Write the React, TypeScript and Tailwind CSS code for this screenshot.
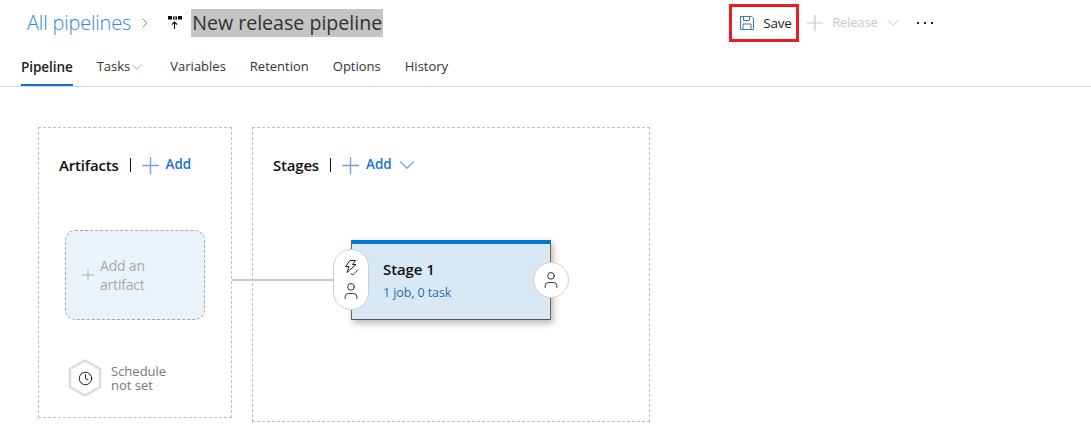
import { ChevronDown, ChevronRight, Clock, Plus, User } from "lucide-react";

const font = "font-['Open_Sans','Noto_Sans',sans-serif]";

function Tab({ label, active, chevron }: { label: string; active?: boolean; chevron?: boolean }) {
  return (
    <div
      className={`flex h-[40px] items-center border-b-2 pt-[4px] ${
        active ? "border-[#0078d4] text-[13.600px] font-semibold tracking-[-0.1px] text-[#222]" : "border-transparent text-[13px] text-[#333]"
      }`}
    >
      {label}
      {chevron && <ChevronDown className="ml-[-2px] h-[18px] w-[18px] text-[#999]" strokeWidth={1.1} />}
    </div>
  );
}

function PipelineIcon() {
  return (
    <svg width="16" height="16" viewBox="0 0 16 16" className="mr-[8px]">
      <rect x="1" y="1" width="4" height="3.500" fill="#111" />
      <rect x="6.500" y="2" width="3" height="2" fill="none" stroke="#111" strokeWidth="1" />
      <rect x="11" y="1" width="4" height="3.500" fill="#111" />
      <path d="M7.500 14V7M5 9.500l2.500-2.500L10 9.500" fill="none" stroke="#111" strokeWidth="1.100" />
    </svg>
  );
}

function SaveIcon() {
  return (
    <svg width="16" height="16" viewBox="0 0 16 16" fill="none">
      <path d="M1.500 1.500h11l2 2v11h-13z" stroke="#2a7fd0" strokeWidth="1" />
      <path d="M4.500 1.500v4h6v-4" stroke="#5a6f86" strokeWidth="1" />
      <path d="M4 14.500v-5.500h8v5.500" stroke="#5a6f86" strokeWidth="1" />
    </svg>
  );
}

function TriggerIcon() {
  return (
    <svg width="18" height="18" viewBox="0 0 18 18" fill="none" stroke="#222" strokeWidth="1">
      <path d="M8 1.500h5.500l-3 4h3.500L5 13.500l2-6H3.500z" />
      <path d="M8.500 14.500l2.500 1.500 5-5.500" stroke="#444" />
    </svg>
  );
}

function SectionTitle({ title, chevron }: { title: string; chevron?: boolean }) {
  return (
    <div className="flex h-[18px] items-center">
      <span className="text-[15px] font-semibold leading-none tracking-[-0.2px] text-[#111]">{title}</span>
      <span className="ml-[11px] h-[14px] w-[1px] bg-[#111]" />
      <Plus className="ml-[6px] h-[27px] w-[27px] text-[#6f9fdc]" strokeWidth={1.2} />
      <span className="ml-[2px] text-[13.500px] font-semibold leading-none text-[#1b74cc]">Add</span>
      {chevron && <ChevronDown className="ml-[2px] h-[26px] w-[26px] text-[#7aa6da]" strokeWidth={1.1} />}
    </div>
  );
}

export default function App() {
  return (
    <div className={`h-[441px] w-[1091px] overflow-hidden bg-white ${font}`}>
      <div className="flex h-[46px] items-center pl-[27px]">
        <span className="text-[20px] font-light tracking-[-0.2px] text-[#2f8ad8]">All pipelines</span>
        <ChevronRight className="ml-[6px] mr-[14px] h-[16px] w-[16px] text-[#777]" strokeWidth={1.2} />
        <PipelineIcon />
        <span className="bg-[#c4c4c4] px-[1px] text-[19.600px] leading-[28px] text-[#333]">New release pipeline</span>
        <div className="ml-[346px] flex h-[38px] w-[70px] items-center gap-[8px] border-[3px] border-[#ec1c24] pl-[7px] text-[13.500px] tracking-[-0.2px] text-[#222]">
          <SaveIcon />
          Save
        </div>
        <div className="ml-[3px] flex items-center text-[#c8c8c8]">
          <Plus className="h-[26px] w-[26px]" strokeWidth={1.1} />
          <span className="ml-[4px] text-[13px] tracking-[-0.2px]">Release</span>
          <ChevronDown className="ml-[5px] h-[20px] w-[20px]" strokeWidth={1.2} />
        </div>
        <div className="ml-[14px] flex gap-[5px]">
          <span className="h-[2px] w-[2px] bg-[#222]" />
          <span className="h-[2px] w-[2px] bg-[#222]" />
          <span className="h-[2px] w-[2px] bg-[#222]" />
        </div>
      </div>

      <div className="flex h-[41px] items-end gap-[24px] border-b border-[#d8d8d8] pl-[21px]">
        <Tab label="Pipeline" active />
        <Tab label="Tasks" chevron />
        <Tab label="Variables" />
        <Tab label="Retention" />
        <Tab label="Options" />
        <Tab label="History" />
      </div>

      <div className="relative flex items-start gap-[20px] pl-[38px] pt-[40px]">
        {/* connector between the artifact box and the stage card */}
        <div className="absolute left-[232px] top-[192px] h-[2px] w-[104px] bg-[#c8c8c8]" />

        <div className="flex h-[291px] w-[194px] flex-col border border-dashed border-[#bdbdbd] pl-[20px] pt-[28px]">
          <SectionTitle title="Artifacts" />
          <div className="ml-[6px] mt-[56px] flex h-[90px] w-[140px] items-center rounded-[10px] border border-dashed border-[#a8a8a8] bg-[#ebf3fa] pl-[13px]">
            <Plus className="h-[18px] w-[18px] text-[#a9a9a9]" strokeWidth={1.2} />
            <span className="ml-[3px] text-[14px] leading-[19px] tracking-[-0.2px] text-[#a9a9a9]">
              Add an
              <br />
              artifact
            </span>
          </div>
          <div className="ml-[9px] mt-[39px] flex items-center">
            <div className="relative flex h-[38px] w-[34px] items-center justify-center">
              <svg width="34" height="38" viewBox="0 0 34 38" className="absolute inset-0">
                <path d="M17 1.500L32 10v18L17 36.500 2 28V10z" fill="#fff" stroke="#dcdcdc" strokeWidth="2.500" />
              </svg>
              <Clock className="relative h-[15px] w-[15px] text-[#111]" strokeWidth={1.5} />
            </div>
            <span className="ml-[9px] text-[13px] leading-[14px] text-[#777]">
              Schedule
              <br />
              not set
            </span>
          </div>
        </div>

        <div className="h-[295px] w-[398px] border border-dashed border-[#bdbdbd] pl-[20px] pt-[28px]">
          <SectionTitle title="Stages" chevron />
          <div className="relative ml-[78px] mt-[66px] h-[80px] w-[200px] border-x border-b border-x-[#666] border-b-[#555] border-t-[4px] border-t-[#0078d4] bg-[#d8e8f5] pl-[31px] pt-[15px] shadow-[2px_3px_7px_rgba(0,0,0,0.3)]">
            <div className="text-[15px] font-semibold leading-[20px] tracking-[-0.1px] text-[#111]">Stage 1</div>
            <div className="mt-[6px] text-[12.500px] leading-[16px] tracking-[-0.1px] text-[#2b6ea8]">1 job, 0 task</div>
            <div className="absolute left-[-19px] top-[5px] flex h-[61px] w-[36px] flex-col items-center justify-center gap-[4px] rounded-[18px] border border-[#d0d0d0] bg-white">
              <TriggerIcon />
              <User className="h-[20px] w-[20px] text-[#222]" strokeWidth={1.1} />
            </div>
            <div className="absolute right-[-19px] top-[18px] flex h-[36px] w-[36px] items-center justify-center rounded-full border border-[#d0d0d0] bg-white">
              <User className="h-[20px] w-[20px] text-[#222]" strokeWidth={1.1} />
            </div>
          </div>
        </div>
      </div>
    </div>
  );
}
